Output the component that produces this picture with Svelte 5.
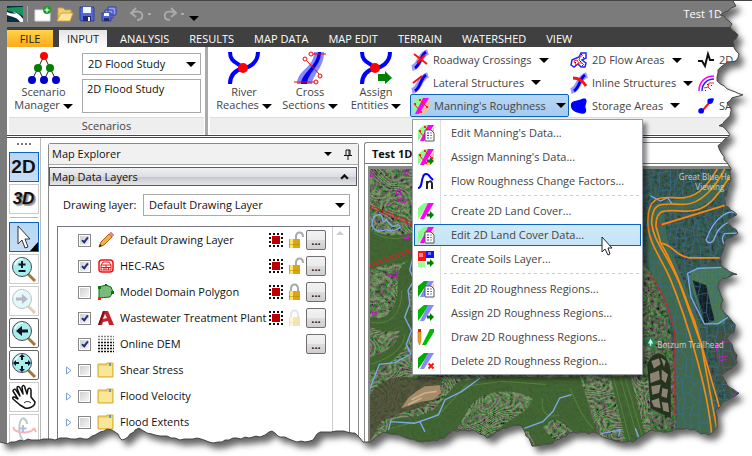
<script>
  const tabs = ['FILE', 'INPUT', 'ANALYSIS', 'RESULTS', 'MAP DATA', 'MAP EDIT', 'TERRAIN', 'WATERSHED', 'VIEW'];
  let activeTab = $state('INPUT');

  const largeButtons = [
    { icon: 'river', lines: ['River', 'Reaches'] },
    { icon: 'sections', lines: ['Cross', 'Sections'] },
    { icon: 'assign', lines: ['Assign', 'Entities'] },
  ];

  const menuGroups = [
    [
      { icon: 'manning-edit', label: "Edit Manning's Data..." },
      { icon: 'manning-assign', label: "Assign Manning's Data..." },
      { icon: 'curve', label: 'Flow Roughness Change Factors...' },
    ],
    [
      { icon: 'cover-create', label: 'Create 2D Land Cover...' },
      { icon: 'cover-edit', label: 'Edit 2D Land Cover Data...', active: true },
      { icon: 'soils', label: 'Create Soils Layer...' },
    ],
    [
      { icon: 'region-edit', label: 'Edit 2D Roughness Regions...' },
      { icon: 'region-assign', label: 'Assign 2D Roughness Regions...' },
      { icon: 'region-draw', label: 'Draw 2D Roughness Regions...' },
      { icon: 'region-delete', label: 'Delete 2D Roughness Region...' },
    ],
  ];

  let layers = $state([
    { icon: 'pencil', label: 'Default Drawing Layer', checked: true, lock: 'open', more: true },
    { icon: 'ras', label: 'HEC-RAS', checked: true, lock: 'open', more: true },
    { icon: 'polygon', label: 'Model Domain Polygon', checked: false, lock: 'closed', more: true },
    { icon: 'cad', label: 'Wastewater Treatment Plant', checked: true, lock: 'faded', more: true },
    { icon: 'dem', label: 'Online DEM', checked: true, more: true },
    { icon: 'folder', label: 'Shear Stress', checked: false, folder: true },
    { icon: 'folder', label: 'Flood Velocity', checked: false, folder: true },
    { icon: 'folder', label: 'Flood Extents', checked: false, folder: true },
  ]);

  const tools = [
    { id: '2d', label: '2D view', selected: true },
    { id: '3d', label: '3D view' },
    { id: 'pointer', label: 'Select', selected: true, first: true },
    { id: 'zoom', label: 'Zoom' },
    { id: 'next', label: 'Next view', faded: true },
    { id: 'back', label: 'Previous view', framed: true },
    { id: 'extents', label: 'Zoom extents', framed: true },
    { id: 'hand', label: 'Pan' },
    { id: 'rotate', label: 'Rotate', faded: true },
  ];

  // small repeatable generator so the mesh and the torn edge stay the same on each load
  function random(seed) {
    let s = seed;
    return () => {
      s = (s * 16807) % 2147483647;
      return s / 2147483647;
    };
  }

  function buildMesh(x0, y0, x1, y1, size) {
    const rnd = random(41);
    const rows = Math.ceil((y1 - y0) / size);
    const cols = Math.ceil((x1 - x0) / size);
    const pts = [];
    for (let r = 0; r <= rows; r++) {
      pts.push([]);
      for (let c = 0; c <= cols; c++) {
        pts[r].push([
          Math.round(x0 + (c + (rnd() - 0.5) * 0.7) * size),
          Math.round(y0 + (r + (rnd() - 0.5) * 0.7) * size),
        ]);
      }
    }
    let d = '';
    for (let r = 0; r < rows; r++) {
      for (let c = 0; c < cols; c++) {
        const p = pts[r][c];
        if ((r + c) % 2) d += `M${p}L${pts[r][c + 1]}`;
        d += `M${p}L${pts[r + 1][c]}`;
      }
    }
    return d;
  }

  function roughen(points, seed) {
    const rnd = random(seed);
    const out = [];
    for (let i = 0; i < points.length - 1; i++) {
      const [ax, ay] = points[i];
      const [bx, by] = points[i + 1];
      const n = Math.max(1, Math.round(Math.hypot(bx - ax, by - ay) / 4));
      for (let k = 0; k < n; k++) {
        const t = k / n;
        const j = k ? 2 : 0;
        out.push([
          Math.round(ax + (bx - ax) * t + (rnd() - 0.5) * j),
          Math.round(ay + (by - ay) * t + (rnd() - 0.5) * j),
        ]);
      }
    }
    out.push(points[points.length - 1]);
    return out.map((p) => p.join(' ')).join('L');
  }

  const tear = roughen([
    [733, 0], [736, 5], [731, 7], [725, 11], [720, 14], [726, 18], [732, 23], [730, 26], [735, 31], [738, 34],
    [733, 40], [734, 47], [739, 53], [736, 60], [727, 61], [718, 69], [717, 80], [727, 88], [743, 94], [732, 97],
    [727, 102], [731, 107], [730, 115], [719, 125], [725, 128], [730, 134], [718, 145], [731, 168], [731, 178],
    [727, 192], [724, 198], [725, 205], [737, 214], [726, 220], [738, 233], [727, 238], [724, 246], [720, 257],
    [723, 267], [737, 274], [722, 278], [718, 287], [723, 300], [721, 308], [735, 324], [734, 332], [727, 338],
    [737, 355], [737, 363], [722, 375], [727, 385], [739, 393], [727, 400], [715, 410], [717, 420], [717, 428],
    [708, 435], [687, 428], [667, 432], [652, 430], [633, 442], [618, 442], [605, 438], [597, 433], [573, 432],
    [553, 443], [532, 446], [525, 432], [520, 425], [503, 428], [487, 438], [473, 430], [453, 430], [437, 441],
    [417, 441], [400, 435], [383, 432], [370, 442], [363, 442], [355, 433], [340, 431], [320, 432], [313, 440],
    [297, 442], [280, 437], [272, 431], [260, 437], [237, 438], [213, 443], [197, 438], [180, 440], [167, 436],
    [147, 433], [139, 428], [128, 437], [122, 440], [115, 432], [107, 429], [95, 435], [88, 439], [67, 438],
    [40, 440], [20, 440], [7, 444], [0, 442],
  ], 7);

  const mesh = buildMesh(840, 110, 1160, 960, 24);
  const fineMesh = buildMesh(840, 110, 1160, 960, 11);
</script>

{#snippet bands(a, b, c)}
  <path d="M0 11V5L6 0H11L3 12L0 16Z" fill={a} />
  <path d="M2 16L10 0H16L6 16Z" fill={b} />
  <path d="M7 16L16 2V9L12 16Z" fill={c} />
{/snippet}

{#snippet sheet()}
  <path d="M7 5H13L16 8V16H7Z" fill="#fff" stroke="#555" />
  <path d="M9 8H11M9 10.500H11M9 13H11" stroke="#2238d8" />
  <path d="M12 8H14M12 10.500H14M12 13H14" stroke="#888" />
{/snippet}

{#snippet arrow()}
  <path d="M9 10.500H12V8L16 12L12 16V13.500H9Z" fill="#008000" />
{/snippet}

{#snippet dots()}
  <path d="M2 7L8 14M7 2L14 9" stroke="#e22" />
  <path d="M1 5h2v2H1zM6 1h2v2H6zM13 8h2v2h-2zM7 13h2v2H7z" fill="#f22" />
{/snippet}

{#snippet icon(name)}
  <svg class="icon" viewBox="0 0 16 16" aria-hidden="true">
    {#if name === 'manning'}
      {@render bands('#8f8', '#f0f', '#fb8')}{@render dots()}
    {:else if name === 'manning-edit'}
      {@render bands('#8f8', '#f0f', '#fb8')}{@render dots()}{@render sheet()}
    {:else if name === 'manning-assign'}
      {@render bands('#8f8', '#f0f', '#fb8')}{@render dots()}{@render arrow()}
    {:else if name === 'curve'}
      <path d="M0 15C4 15 3 9 5 4C6 0 10 0 12 4L15 7" fill="none" stroke="#00f" stroke-width="2" />
      <path d="M9 16V8M9 11C10 8 14 7 14 11V16" fill="none" stroke="#222" stroke-width="2" />
    {:else if name === 'cover-create'}
      {@render bands('#8f8', '#f0f', '#fff')}{@render arrow()}
    {:else if name === 'cover-edit'}
      {@render bands('#8f8', '#f0f', '#fb8')}{@render sheet()}
    {:else if name === 'soils'}
      <path d="M0 0H8V10H0Z" fill="#f11" /><path d="M8 0H16V7H8Z" fill="#11f" />
      <path d="M0 11H7V16H0Z" fill="#9f9" /><path d="M1 2H5V6H1Z" fill="#f88" /><path d="M10 1H13V4H10Z" fill="#77f" />
      {@render arrow()}
    {:else if name === 'region-edit'}
      {@render bands('#0a0', '#88f', '#fb8')}{@render sheet()}
    {:else if name === 'region-assign'}
      {@render bands('#0b0', '#88f', '#fff')}{@render arrow()}
    {:else if name === 'region-draw'}
      <path d="M4 16L12 0H16V3L8 16Z" fill="#0b0" />
      <path d="M0 3H3V12L1.500 16L0 12Z" fill="#f0a030" stroke="#a50" stroke-width=".5" /><path d="M0 0H3V3H0Z" fill="#d22" />
    {:else if name === 'region-delete'}
      {@render bands('#0a0', '#88f', '#fff')}
      <path d="M10.500 10.500L15.500 15.500M15.500 10.500L10.500 15.500" stroke="#f11" stroke-width="2" />
    {:else if name === 'roadway' || name === 'lateral' || name === 'inline'}
      <path d="M0 16C9 14 6 3 16 0" fill="none" stroke="#99f" stroke-width="6" />
      <path d="M3 16C9 12 8 4 14 0" fill="none" stroke="#00e" stroke-width="3" />
      {#if name === 'roadway'}
        <path d="M2 2L15 12M13 3L5 11" stroke="#f11" stroke-width="2" />
      {:else if name === 'lateral'}
        <path d="M1 8L10 1" stroke="#f11" stroke-width="2" />
      {:else}
        <path d="M2 3C8 3 12 6 15 11" fill="none" stroke="#f11" stroke-width="3" />
      {/if}
    {:else if name === 'flow'}
      <path d="M1 8L8 5L10 1L15 1L15 6L11 8L15 11L14 15L10 15L7 12L3 15L0 13Z" fill="#fff" stroke="#22f" stroke-width="1.500" />
      <path d="M3 9L6 8L8 11L5 13ZM9 5L12 3M9 5L8 8L11 11L13 13M8 11L11 11" fill="none" stroke="#f22" />
      <path d="M4 10h1v1H4zM10 2h1v1h-1zM12 5h1v1h-1zM9 9h1v1H9zM11 13h1v1h-1z" fill="#222" />
    {:else if name === 'storage'}
      <path d="M15 1C17 5 13 7 15 11C16 15 13 17 8 15C2 14-1 10 0 6C1 3 4 3 8 2C11 1 13 0 15 1Z" fill="#00f" />
    {:else if name === 'pulse'}
      <path d="M0 9H4L7 14L10 2L12 8H16" fill="none" stroke="#111" stroke-width="2" />
    {:else if name === 'boundary'}
      <path d="M1 16C1 7 7 1 16 1" fill="none" stroke="#f0f" stroke-width="1.500" />
      <path d="M4 16C4 9 9 4 16 4" fill="none" stroke="#22f" stroke-width="1.500" />
      <path d="M6 13L10 12L11 8L16 8M10 12L13 15" fill="none" stroke="#f22" />
      <path d="M9 9h1v1H9zM13 10h1v1h-1zM7 15h1v1H7z" fill="#222" />
    {:else if name === 'connection'}
      <path d="M5 12L11 5" stroke="#f11" stroke-width="2" />
      <path d="M10 1C12 0 16 0 16 1C15 3 15 6 12 6C9 6 9 3 10 1Z" fill="#00f" />
      <path d="M1 11C3 9 6 10 6 13C6 16 3 16 1 15C0 14 0 12 1 11Z" fill="#00f" />
    {:else if name === 'pencil'}
      <path d="M1 15L3 10L11 2L14 5L6 13Z" fill="#f6b040" stroke="#a5621c" />
      <path d="M11 2L13 0L16 3L14 5Z" fill="#e88" stroke="#a66" stroke-width=".5" />
      <path d="M1 15L2 12L4 14Z" fill="#222" />
    {:else if name === 'ras'}
      <rect x="1" y="2" width="14" height="12" rx="3" fill="#fff" stroke="#e11" stroke-width="1.500" />
      <path d="M3 12V7H13V12ZM3 7L5 4H11L13 7M6 12V9M8 12V7M10.500 12V9M3 9.500H13" fill="none" stroke="#e11" />
    {:else if name === 'polygon'}
      <path d="M1 3L8 1L13 3L15 8L12 13L1 14Z" fill="#7db87d" stroke="#087808" />
      <path d="M0 2h3v3H0zM7 0h2v2H7zM13 7h3v3h-3z" fill="#087808" /><path d="M0 13h3v3H0z" fill="#f22" />
    {:else if name === 'cad'}
      <path d="M5 1H10L16 15H11L10 11L5 12L4 15H0ZM7 4L5 9L9 8Z" fill="#c82027" />
      <path d="M5 1H7L2 15H0Z" fill="#7c1015" />
    {:else if name === 'dem'}
      {#each [0, 3, 6, 9, 12, 15] as y}
        <path d="M0 {y + 0.5}H16" stroke={y < 6 ? '#888' : '#111'} stroke-width="1.500" stroke-dasharray="2 1" />
      {/each}
    {:else if name === 'folder'}
      <path d="M0 2H9V1H15V15H0Z" fill="#f3d56a" stroke="#d5aa35" />
      <path d="M1 4H14V14H1Z" fill="#fae698" /><path d="M11 1h2v3h-2z" fill="#4ba0e0" />
    {:else if name === 'new'}
      <path d="M0 4H15V15H0Z" fill="#fff" stroke="#ddd" /><circle cx="12" cy="4" r="4" fill="#1b9c2c" /><path d="M12 1.500V6.500M9.500 4H14.500" stroke="#fff" />
    {:else if name === 'open'}
      <path d="M1 14V2H6L8 4H14V7" fill="#f3d078" stroke="#d5a23d" /><path d="M0 15L4 7H16L13 15Z" fill="#ffe69a" stroke="#d5a23d" />
    {:else if name === 'save'}
      <path d="M1 1H15V15H2L1 14Z" fill="#5068d8" stroke="#3040a0" /><path d="M4 1H12V7H4Z" fill="#f4f6ff" /><path d="M4 10H12V15H4Z" fill="#222a70" /><path d="M9 11h2v4H9z" fill="#fff" />
    {:else if name === 'save-all'}
      <path d="M7 1H15V9H7ZM4 4H12V12H4Z" fill="#8c9cf0" stroke="#3040a0" /><path d="M1 7H10V15H1Z" fill="#5068d8" stroke="#3040a0" /><path d="M3 7H8V10H3Z" fill="#fff" /><path d="M3 12h5v3H3z" fill="#222a70" />
    {:else if name === 'undo' || name === 'redo'}
      <g transform={name === 'redo' ? 'translate(16 0) scale(-1 1)' : undefined}>
        <path d="M8 14C13 14 14 11 13 8C12 5 7 5 3 7M7 2L2 7L7 11" fill="none" stroke="#aaa" stroke-width="2" />
      </g>
    {/if}
  </svg>
{/snippet}

{#snippet largeIcon(name)}
  <svg class="large-icon" viewBox="0 0 32 32" aria-hidden="true">
    {#if name === 'scenario'}
      <path d="M16 4L4 28M10 16L16 28M16 4L28 28M22 16L16 28" stroke="#222" fill="none" />
      <circle cx="16" cy="4" r="4" fill="#f00" />
      <circle cx="10" cy="16" r="4" fill="#008000" /><circle cx="22" cy="16" r="4" fill="#008000" />
      <circle cx="4" cy="28" r="4" fill="#00c" /><circle cx="16" cy="28" r="4" fill="#00c" /><circle cx="28" cy="28" r="4" fill="#00c" />
    {:else if name === 'sections'}
      <path d="M3 32C3 18 20 16 20 0H30C30 16 20 20 18 32Z" fill="#88f" />
      <path d="M7 32C8 20 22 16 24 0H27C27 14 14 20 13 32Z" fill="#00e" />
      <path d="M17 2H32M13 9L25 22M0 30H21" stroke="#f00" fill="none" />
      <g fill="#fff" stroke="#f00"><circle cx="17" cy="2" r="2" /><circle cx="11" cy="7" r="2" /><circle cx="26" cy="24" r="2" /><circle cx="22" cy="30" r="2" /></g>
    {:else}
      <path d="M2 0C2 10 9 10 15 16C22 16 30 10 30 0M15 16C8 18 2 22 2 32" fill="none" stroke="#00f" stroke-width="4" />
      <circle cx="15" cy="16" r="5" fill="#f00" />
      {#if name === 'assign'}<path d="M18 22H25V19L32 26L25 32V29H18Z" fill="#008000" />{/if}
    {/if}
  </svg>
{/snippet}

{#snippet lens()}
  <path d="M17 18L25 26" stroke="#a8743c" stroke-width="3" />
  <circle cx="12" cy="12" r="9.500" fill="#a8efe6" stroke="#446" />
  <path d="M5 10A8 8 0 0 1 13 4" stroke="#e8fffc" stroke-width="2" fill="none" />
{/snippet}

{#snippet toolIcon(id)}
  {#if id === '2d'}
    <span class="view-label">2D</span>
  {:else if id === '3d'}
    <span class="view-label slanted">3D</span>
  {:else}
    <svg viewBox="0 0 28 28" aria-hidden="true">
      {#if id === 'pointer'}
        <path d="M8 3V21L12 17L15 25L18 24L15 16H20Z" fill="#fff" stroke="#333" /><path d="M28 19V28H20Z" />
      {:else if id === 'zoom'}
        {@render lens()}<path d="M12 6V13M8.500 9.500H15.500M8.500 16H15.500" stroke="#113" stroke-width="2" />
      {:else if id === 'next'}
        {@render lens()}<path d="M6 10.500H12V7L18 12L12 17V13.500H6Z" fill="#336" />
      {:else if id === 'back'}
        {@render lens()}<path d="M18 10.500H12V7L6 12L12 17V13.500H18Z" fill="#113" />
      {:else if id === 'extents'}
        {@render lens()}<path d="M12 3L15 6H13V9H11V6H9ZM12 21L9 18H11V15H13V18H15ZM3 12L6 9V11H9V13H6V15ZM21 12L18 15V13H15V11H18V9Z" fill="#113" />
      {:else if id === 'hand'}
        <path d="M10 22L3 16C2 14 4 13 6 15L8 16L3 8C3 6 5 6 6 7L10 13L7 5C7 3 9 3 10 5L13 11L12 4C13 2 15 2 15 5L17 11L18 6C19 5 21 5 21 7L21 14L25 19C25 24 18 26 15 25Z" fill="#fff" stroke="#111" stroke-width="1.500" stroke-linejoin="round" />
        <path d="M14 20C16 18 19 18 21 20" fill="none" stroke="#111" />
      {:else}
        <path d="M13 3C8 6 8 20 13 25M13 3C17 5 17 9 17 9" fill="none" stroke="#375" stroke-width="2" />
        <path d="M4 12C1 18 22 20 24 13M24 13L26 17" fill="none" stroke="#d33" stroke-width="2" />
        <path d="M13 10V17M9.500 13.500H16.500" stroke="#33c" stroke-width="2" />
      {/if}
    </svg>
  {/if}
{/snippet}

{#snippet splitButton(name, label)}
  <button class="small-button" aria-label={label || name}>{@render icon(name)}<span>{label}</span><i class="caret"></i></button>
{/snippet}

<div class="app">
  <header class="titlebar">
    <svg class="logo" viewBox="0 0 16 16" aria-hidden="true">
      <path d="M0 0H16V16H0Z" fill="#0a2c40" /><path d="M0 2C4 1 10 1 16 1V10C11 6 5 6 0 4Z" fill="#14965a" />
      <path d="M0 4C5 7 10 4 16 13V16H13C10 11 5 11 0 9V6C3 8 7 7 9 8C6 5 3 6 0 4Z" fill="#fff" />
    </svg>
    <span class="title-rule"></span>
    {#each ['new', 'open', 'save', 'save-all'] as name}
      <button class="quick" aria-label={name}>{@render icon(name)}</button>
    {/each}
    <button class="quick history" aria-label="Undo">{@render icon('undo')}<i></i></button>
    <button class="quick history" aria-label="Redo">{@render icon('redo')}<i></i></button>
    <button class="quick more" aria-label="Customize toolbar"><i class="caret"></i></button>
    <span class="window-title">Test 1D</span>
  </header>

  <nav class="tabs">
    {#each tabs as tab}
      <button class:file={tab === 'FILE'} class:active={tab === activeTab} onclick={() => (activeTab = tab)}>{tab}</button>
    {/each}
  </nav>

  <section class="ribbon">
    <div class="group scenarios">
      <div class="group-body">
        <button class="large-button">
          {@render largeIcon('scenario')}
          <span>Scenario</span>
          <span>Manager <i class="caret"></i></span>
        </button>
        <div class="fields">
          <div class="select-wrap">
            <select aria-label="Scenario"><option>2D Flood Study</option></select>
            <i class="caret"></i>
          </div>
          <textarea aria-label="Scenario description">2D Flood Study</textarea>
        </div>
      </div>
      <footer>Scenarios</footer>
    </div>
    <div class="group inputs">
      <div class="group-body">
        {#each largeButtons as button}
          <button class="large-button">
            {@render largeIcon(button.icon)}
            <span>{button.lines[0]}</span>
            <span>{button.lines[1]} <i class="caret"></i></span>
          </button>
        {/each}
        <div class="stack first">
          {@render splitButton('roadway', 'Roadway Crossings')}
          {@render splitButton('lateral', 'Lateral Structures')}
          <div class="menu-anchor">
            <button class="small-button open" aria-haspopup="menu" aria-expanded="true">
              {@render icon('manning')}<span>Manning's Roughness</span><i class="caret"></i>
            </button>
            <div class="menu" role="menu">
              {#each menuGroups as group}
                <div class="menu-group">
                  {#each group as item}
                    <button role="menuitem" class:active={item.active}>{@render icon(item.icon)}<span>{item.label}</span></button>
                  {/each}
                </div>
              {/each}
              <svg class="cursor" viewBox="0 0 12 20" aria-hidden="true">
                <path d="M1 1V16L4 13L7 19L9 18L7 12H11Z" fill="#fff" stroke="#223" />
              </svg>
            </div>
          </div>
        </div>
        <div class="stack second">
          {@render splitButton('flow', '2D Flow Areas')}
          {@render splitButton('inline', 'Inline Structures')}
          {@render splitButton('storage', 'Storage Areas')}
        </div>
        <div class="stack">
          {@render splitButton('pulse', '2D')}
          {@render splitButton('boundary', '')}
          {@render splitButton('connection', 'SA')}
        </div>
      </div>
      <footer></footer>
    </div>
  </section>

  <main>
    <aside class="toolbar">
      <span class="grip"></span>
      {#each tools as tool}
        <button class:selected={tool.selected} class:faded={tool.faded} class:framed={tool.framed} class:first={tool.first} aria-label={tool.label}>
          {@render toolIcon(tool.id)}
        </button>
      {/each}
    </aside>

    <section class="explorer">
      <header class="panel-title">
        <span>Map Explorer</span>
        <i class="caret"></i>
        <svg class="pin" viewBox="0 0 8 11" aria-hidden="true"><path d="M2 6V1H6V6M5 1V6M0 6.500H8M4 7V11" fill="none" stroke="#111" /></svg>
      </header>
      <button class="section-title">
        <span>Map Data Layers</span>
        <svg viewBox="0 0 8 6" aria-hidden="true"><path d="M1 5L4 2L7 5" fill="none" stroke="#111" stroke-width="2" /></svg>
      </button>
      <div class="drawing-layer">
        <label for="drawing-layer">Drawing layer:</label>
        <div class="select-wrap">
          <select id="drawing-layer"><option>Default Drawing Layer</option></select>
          <i class="caret"></i>
        </div>
      </div>
      <div class="tree">
        <ul>
          {#each layers as layer, i}
            <li>
              <span class="expander">
                {#if layer.folder}
                  <svg viewBox="0 0 6 9" aria-hidden="true"><path d="M.5 1V8L5 4.500Z" fill="#fff" stroke="#7da0cf" /></svg>
                {/if}
              </span>
              <input type="checkbox" id="layer-{i}" bind:checked={layer.checked} />
              {@render icon(layer.icon)}
              <label for="layer-{i}">{layer.label}</label>
              {#if layer.lock}
                <span class="extent"></span>
                <svg class="lock" class:pale={layer.lock === 'faded'} viewBox="0 0 18 18" aria-hidden="true">
                  <path d={layer.lock === 'open' ? 'M10 9V6C10 0 17 0 17 6' : 'M5 9V6C5 0 12 0 12 6V9'} fill="none" stroke="#aaa" stroke-width="2" />
                  <path d="M3 8H14V17H3Z" fill="#dba514" /><path d="M4 8H7V17H4Z" fill="#ffe36a" /><path d="M3 13.500H14" stroke="#b88200" stroke-opacity=".5" />
                </svg>
              {/if}
              {#if layer.more}<button class="dots">...</button>{/if}
            </li>
          {/each}
        </ul>
        <div class="scroll"><i></i></div>
      </div>
    </section>

    <section class="map-window">
      <header>Test 1D</header>
      <svg class="map" viewBox="27 120 1149 858" preserveAspectRatio="xMinYMin slice" aria-label="Aerial map">
        <defs>
          <filter id="trees" x="0" y="0" width="100%" height="100%">
            <feTurbulence type="fractalNoise" baseFrequency=".1" numOctaves="3" seed="4" />
            <feColorMatrix values=".6 0 0 0 -.17  0 .65 0 0 -.13  .4 0 0 0 -.1  0 0 0 0 1" />
          </filter>
          <filter id="contours" x="0" y="0" width="100%" height="100%">
            <feTurbulence type="fractalNoise" baseFrequency=".005 .007" numOctaves="3" seed="12" />
            <feColorMatrix values="0 0 0 0 .3  0 0 0 0 .46  0 0 0 0 .18  1.3 0 0 0 -.15" />
            <feComponentTransfer>
              <feFuncA type="table" tableValues="0 0 0 0 .8 0 0 .8 0 0 .8 0 0 .8 0 0 .8 0 0 .8 0 0 .8 0 0 .8 0 0 .8 0 0 .8 0 0 .8 0 0 .8 0 0 .8 0 0 .8 0 0 .8 0 0 0" />
            </feComponentTransfer>
          </filter>
          <clipPath id="mesh-area">
            <path d="M830 110H1176V960H935C935 780 935 560 880 460L840 400Z" />
          </clipPath>
        </defs>
        <rect x="27" y="120" width="1149" height="858" fill="#1b2a1d" />
        <rect x="27" y="120" width="1149" height="858" filter="url(#trees)" opacity=".8" />
        <rect x="27" y="120" width="830" height="858" filter="url(#contours)" opacity=".8" />

        <g class="meadow">
          <path d="M27 300C60 320 100 320 156 310V420L150 470C130 500 160 550 150 600C150 640 100 700 27 720V680C70 660 110 650 115 600C60 610 40 590 27 590V560C70 570 100 550 110 480C110 430 110 410 140 395C80 400 50 410 27 420Z" />
          <path d="M60 940L85 870C130 850 190 860 220 830L290 750L420 735L560 740L650 735L700 900L640 910C590 860 570 850 540 890L580 930L520 950L500 900L430 890L380 920C440 850 500 850 510 800C450 770 360 770 320 830L270 920L200 950Z" />
          <path d="M740 735H800L850 930L790 940Z" />
        </g>
        <g class="ridges">
          <path d="M30 575C80 585 120 560 122 480M30 700C90 680 130 650 130 610M40 310C80 335 120 325 150 320M90 890C150 870 200 870 240 840L310 765L420 750L550 760M300 900L340 830C380 785 460 790 500 810M540 800C530 850 560 860 590 850M620 770C640 810 650 850 690 890M750 740L800 930M770 740L825 930M785 740L840 930" />
        </g>
        <path d="M27 790C60 740 110 730 157 740H240C250 790 200 830 130 840L60 870L27 930Z" fill="#4a4731" opacity=".75" />
        <path d="M120 830L140 800L165 780L190 765L235 762L238 785L215 805L175 812Z" fill="#a68b69" />
        <path d="M150 805L190 785L225 780M140 820L180 800" fill="none" stroke="#c9b290" stroke-width="5" />
        <path d="M850 700C870 650 910 660 920 720V860L860 830Z" fill="#24331f" />
        <path d="M862 690L885 682L890 700L870 712ZM890 680L905 690L900 708ZM858 728L885 718L888 745L860 755ZM893 715L912 730L905 755L893 745ZM862 765L890 760L885 785L865 790ZM895 770L912 775L908 800L892 795ZM862 808L885 800L890 830L870 826ZM893 812L912 815L915 842L898 838Z" fill="#8b8272" />

        <g clip-path="url(#mesh-area)">
          <path d="M830 110H1176V960H830Z" fill="#24474a" opacity=".6" />
          <path d="M850 240C880 200 1000 240 1070 120L1110 130C1060 240 980 240 900 250L910 330L1000 560L1070 900L1040 940H940L930 600L850 400Z" fill="#41694a" />
          <path d="M970 440L1000 410L1120 410L1080 450L1090 530L1080 580L1020 582Z" fill="#4c7a52" />
          <path d="M985 450L1025 465L1050 570L1020 580Z" fill="#151f22" />
          <path d="M1050 610L1120 590L1150 690L1100 800L1060 740Z" fill="#46503d" />
          <path class="cells" d={mesh} />
          <path class="cells fine" d={fineMesh} />
        </g>

        <g class="water">
          <path d="M40 260C20 300 50 310 75 300C100 310 130 290 110 285C90 300 85 280 75 270C60 290 70 260 55 255Z" />
          <path d="M155 380L145 420L158 450L140 480L145 520L130 560L150 600L135 640L148 670L100 695L55 700L35 750L27 775" />
          <path d="M82 895L88 870L160 875L230 850L250 805L300 780L355 740M190 900L175 870M485 890L540 870L570 840L590 800L625 790" />
          <path d="M725 930L715 905L770 895L765 915M815 890L828 925" />
          <path d="M860 200L890 215L910 205L925 225" />
          <path d="M1125 260C1100 230 1050 260 1025 330C1030 345 1045 340 1050 325C1060 295 1080 280 1105 275M1125 310L1080 312C1065 330 1080 350 1090 345" />
          <path d="M1070 412L1000 415L970 430L980 500L1020 580L1060 580L1090 560" />
        </g>
        <g class="road">
          <path d="M27 235L160 290M27 228L160 282M27 410L160 362M27 402L160 354M850 425C890 470 920 540 932 610V850M850 295L1090 225" />
        </g>
        <g class="levee">
          <path d="M1058 120C1040 150 1010 200 960 205C910 210 850 180 852 280C853 340 890 380 920 450C960 550 1030 760 1042 915" />
          <path d="M1080 120C1055 170 1010 225 960 225C900 225 865 210 863 280C870 340 910 370 950 470L1010 640L1058 898" />
          <path d="M1110 120C1065 185 1040 245 970 245C910 245 875 230 876 290L890 340C940 420 960 500 990 570L1068 840" />
          <path d="M893 285L1090 225M890 340C930 345 925 375 975 384H1077" />
        </g>
        <g class="buildings">
          <path d="M27 132L37 132L35 142H27ZM130 125L142 128L138 137L128 133ZM105 185L118 182V195H106ZM110 205L135 212L132 220L108 213ZM125 317H142V326H127ZM84 432L107 428V437L84 440ZM34 545H45V556H36ZM628 902L636 900V908ZM1100 630L1055 640L1060 680L1090 675M1065 690L1085 685M1140 785L1110 790L1097 808" />
        </g>
        <circle cx="860" cy="634" r="15" fill="#238b58" /><path d="M860 624L868 638H852ZM858 638h4v7h-4z" fill="#dfe" />
        <g class="places">
          <text x="944" y="153">Great Blue He</text>
          <text x="993" y="181">Viewing A</text>
          <text x="880" y="650">Botzum Trailhead</text>
        </g>
      </svg>
    </section>
  </main>

  <!-- ragged sheet edge with its shadow -->
  <svg class="tear" viewBox="0 0 752 456" preserveAspectRatio="none" aria-hidden="true">
    <defs>
      <clipPath id="outside"><path d="M{tear}V456H752V0Z" /></clipPath>
      <filter id="soft"><feGaussianBlur stdDeviation="3" /></filter>
    </defs>
    <g clip-path="url(#outside)">
      <path d="M0 0H752V456H0Z" fill="#fff" />
      <path d="M{tear}V0Z" transform="translate(5 6)" fill="#666" filter="url(#soft)" />
    </g>
    <path d="M{tear}" fill="none" stroke="#444" />
  </svg>
</div>

<style>
  :global(body) {
    margin: 0;
    background: #fff;
  }

  .app {
    position: relative;
    display: flex;
    flex-direction: column;
    height: 100vh;
    padding-left: 7px;
    box-sizing: border-box;
    overflow: hidden;
    background: #7b7b7b;
    border-top: 1px solid #444;
    font-family: 'Open Sans', 'Noto Sans', sans-serif;
    font-size: 11px;
    line-height: 14px;
    color: #111;
  }

  button, select, textarea, input {
    margin: 0;
    padding: 0;
    font: inherit;
    color: inherit;
    border: 0;
    border-radius: 0;
    background: none;
    box-sizing: border-box;
  }

  svg {
    display: block;
    flex: none;
  }

  .icon {
    width: 16px;
    height: 16px;
    overflow: visible;
  }

  .caret {
    flex: none;
    display: inline-block;
    border: 5px solid transparent;
    border-top: 5px solid #000;
    border-bottom: 0;
  }

  /* title bar */
  .titlebar {
    flex: none;
    display: flex;
    align-items: center;
    height: 26px;
  }
  .logo {
    width: 16px;
    height: 16px;
  }
  .title-rule {
    width: 1px;
    height: 16px;
    margin: 0 7px 0 4px;
    background: #aaa;
  }
  .quick {
    display: flex;
    align-items: center;
    margin-right: 6px;
  }
  .history {
    margin: 0 5px 0 6px;
    gap: 3px;
  }
  .history i {
    width: 3px;
    height: 2px;
    background: #aaa;
  }
  .more {
    padding-top: 8px;
  }
  .window-title {
    margin: 0 30px 0 auto;
    color: #fff;
  }

  /* ribbon tabs */
  .tabs {
    flex: none;
    display: flex;
    align-items: flex-end;
    height: 20px;
    background: #404040;
  }
  .tabs button {
    height: 17px;
    padding: 0 10px;
    color: #fff;
    line-height: 16px;
    white-space: nowrap;
  }
  .tabs .file {
    width: 46px;
    margin-right: 6px;
    color: #222;
    background: linear-gradient(#ffd34a, #fba919);
  }
  .tabs .active {
    padding: 0 8px;
    margin-right: 3px;
    color: #222;
    background: linear-gradient(#e4e4e4, #fff);
  }

  /* ribbon */
  .ribbon {
    flex: none;
    position: relative;
    z-index: 2;
    display: flex;
    height: 88px;
    background: #fff;
    border-bottom: 3px double #444;
  }
  .group {
    display: flex;
    flex-direction: column;
  }
  .scenarios {
    flex: none;
    width: 198px;
    border-right: 3px solid #aaa;
  }
  .inputs {
    flex: 1;
    min-width: 0;
  }
  .group-body {
    flex: 1;
    display: flex;
    min-height: 0;
  }
  .inputs .group-body {
    padding-left: 3px;
  }
  .group footer {
    flex: none;
    height: 16px;
    margin: 0 1px 1px 2px;
    text-align: center;
    line-height: 16px;
    color: #444;
    background: #eee;
    border-top: 1px solid #ddd;
  }
  .large-button {
    flex: none;
    display: flex;
    flex-direction: column;
    align-items: center;
    width: 66px;
    padding-top: 5px;
    line-height: 13px;
    color: #444;
    white-space: nowrap;
  }
  .scenarios .large-button {
    width: 73px;
  }
  .large-icon {
    width: 32px;
    height: 32px;
    overflow: visible;
    margin-bottom: 1px;
  }
  .fields {
    flex: 1;
    display: flex;
    flex-direction: column;
    gap: 4px;
    min-width: 0;
    padding: 6px 4px 4px 2px;
  }
  .select-wrap {
    position: relative;
    display: flex;
    align-items: center;
    border: 1px solid #aaa;
    background: #fff;
  }
  .select-wrap select {
    appearance: none;
    width: 100%;
    height: 20px;
    padding: 0 20px 0 5px;
  }
  .select-wrap .caret {
    position: absolute;
    right: 4px;
    pointer-events: none;
  }
  textarea {
    width: 100%;
    height: 35px;
    padding: 2px 4px;
    resize: none;
    border: 1px solid #aaa;
  }
  .stack {
    flex: none;
    display: flex;
    flex-direction: column;
    align-items: flex-start;
    padding-top: 2px;
  }
  .stack.first {
    width: 159px;
    margin-left: 1px;
  }
  .stack.second {
    width: 127px;
  }
  .small-button {
    display: flex;
    align-items: center;
    gap: 5px;
    height: 23px;
    padding: 0 2px;
    color: #444;
    white-space: nowrap;
  }
  .small-button .caret {
    margin-left: 2px;
  }
  .small-button.open {
    width: 100%;
    border: 1px solid #0a64ba;
    border-radius: 2px;
    background: linear-gradient(#b8d6f3, #a5cbf0);
  }
  .small-button.open .caret {
    margin-left: auto;
  }
  .menu-anchor {
    position: relative;
    width: 100%;
  }

  /* drop-down menu */
  .menu {
    position: absolute;
    top: 25px;
    left: 2px;
    z-index: 5;
    width: 231px;
    padding: 1px;
    box-sizing: border-box;
    border: 1px solid #999ca2;
    background: linear-gradient(90deg, #fff 27px, #ddd 27px, #ddd 28px, #fff 28px);
    box-shadow: 4px 4px 4px rgba(0, 0, 0, 0.45);
  }
  .menu-group {
    display: flex;
    flex-direction: column;
  }
  .menu-group + .menu-group {
    padding-top: 6px;
    background: repeating-linear-gradient(90deg, #ccc 0 3px, transparent 3px 6px) 30px 2px / 100% 1px no-repeat;
  }
  .menu button {
    display: flex;
    align-items: center;
    gap: 17px;
    height: 22px;
    margin: 1px 0;
    padding: 0 3px;
    border: 1px solid transparent;
    color: #444;
    white-space: nowrap;
  }
  .menu button.active {
    border-color: #0a64ba;
    background: linear-gradient(#cfe9f6, #c4e5f6);
  }
  .cursor {
    position: absolute;
    left: 188px;
    top: 116px;
    width: 12px;
    height: 20px;
  }

  /* left toolbar */
  main {
    flex: 1;
    display: flex;
    min-height: 0;
    background: #fff;
  }
  .toolbar {
    flex: none;
    display: flex;
    flex-direction: column;
    align-items: center;
    gap: 2px;
    width: 34px;
    box-sizing: border-box;
    border-right: 1px solid #bbb;
  }
  .grip {
    width: 14px;
    height: 2px;
    margin: 5px 0 5px;
    background: repeating-linear-gradient(90deg, #777 0 2px, transparent 2px 4px);
  }
  .toolbar button {
    position: relative;
    flex: none;
    width: 30px;
    height: 30px;
    border: 1px solid #ccc;
  }
  .toolbar .first {
    margin-top: 6px;
  }
  .toolbar .first::before {
    content: '';
    position: absolute;
    left: 0;
    right: 0;
    top: -6px;
    border-top: 1px solid #bbb;
  }
  .toolbar .selected {
    border-color: #0a64ba;
    background: linear-gradient(#b8d6f3, #c6def6);
  }
  .toolbar .framed {
    border-color: #666;
    border-radius: 2px;
  }
  .toolbar .faded svg {
    opacity: 0.35;
  }
  .view-label {
    font: bold 19px/28px 'Liberation Sans', sans-serif;
  }
  .slanted {
    font-size: 17px;
    font-style: italic;
    text-shadow: 1px 1px #888, 2px 2px #aaa;
  }

  /* map explorer */
  .explorer {
    flex: none;
    display: flex;
    flex-direction: column;
    width: 311px;
    margin: 5px 0 0 7px;
    box-sizing: border-box;
    border: 1px solid #888;
    border-bottom: 0;
    border-radius: 3px 3px 0 0;
  }
  .panel-title {
    display: flex;
    align-items: center;
    height: 20px;
    padding: 0 6px 0 3px;
    border-bottom: 1px solid #aaa;
    background: #f1f1f1;
  }
  .panel-title .caret {
    margin: 0 12px 0 auto;
    border-width: 4px 4px 0;
  }
  .pin {
    width: 8px;
    height: 11px;
  }
  .section-title {
    display: flex;
    align-items: center;
    justify-content: space-between;
    height: 19px;
    margin: 2px 1px 0 0;
    padding: 0 7px 0 2px;
    border: 1px solid #555a66;
    background: linear-gradient(#f0f1f3, #dcdee2 50%, #c3c6cc 51%, #e4e5e8);
  }
  .section-title svg {
    width: 9px;
    height: 7px;
  }
  .drawing-layer {
    display: flex;
    align-items: center;
    gap: 7px;
    margin: 8px 8px 10px 14px;
  }
  .drawing-layer label {
    width: 73px;
    white-space: nowrap;
  }
  .drawing-layer .select-wrap {
    flex: 1;
  }
  .tree {
    flex: 1;
    display: flex;
    min-height: 0;
    margin: 0 8px;
    border: 1px solid #778;
    border-bottom: 0;
  }
  ul {
    flex: 1;
    margin: 0;
    padding: 0;
    list-style: none;
  }
  li {
    display: flex;
    align-items: center;
    height: 26px;
    padding-right: 6px;
  }
  .expander {
    width: 12px;
    padding-left: 8px;
  }
  .expander svg {
    width: 6px;
    height: 9px;
  }
  input[type='checkbox'] {
    appearance: none;
    position: relative;
    flex: none;
    width: 13px;
    height: 13px;
    margin-right: 7px;
    border: 1px solid #888;
    background: linear-gradient(135deg, #ccc, #fafafa);
    box-shadow: inset 0 0 0 1px #fff;
  }
  input[type='checkbox']:checked::before {
    content: '';
    position: absolute;
    left: 4px;
    top: 1px;
    width: 2px;
    height: 5px;
    border: solid #22307c;
    border-width: 0 2px 2px 0;
    transform: rotate(38deg);
  }
  li label {
    flex: 1;
    margin-left: 6px;
    white-space: nowrap;
  }
  /* dashed black frame, white gap, red square */
  .extent {
    width: 8px;
    height: 8px;
    margin-right: 3px;
    padding: 1px;
    border: 2px dotted #111;
    background: #c00000 content-box;
  }
  .lock {
    width: 18px;
    height: 18px;
    margin-right: 2px;
  }
  .pale {
    opacity: 0.3;
  }
  .dots {
    width: 20px;
    height: 20px;
    padding-top: 2px;
    border: 1px solid #707070;
    border-radius: 2px;
    font-weight: bold;
    background: linear-gradient(#f2f2f2, #ebebeb 50%, #ddd 51%, #cfcfcf);
  }
  .scroll {
    width: 16px;
    border-left: 1px solid #ccc;
  }
  .scroll i {
    display: block;
    width: 0;
    margin: 4px 0 0 3px;
    border: 4px solid transparent;
    border-top: 0;
    border-bottom: 4px solid #ccc;
  }

  /* map window */
  .map-window {
    flex: 1;
    display: flex;
    flex-direction: column;
    min-width: 0;
    margin: 4px 0 0 5px;
    border: 1px solid #888;
    border-right: 0;
    border-radius: 3px 0 0 0;
  }
  .map-window header {
    flex: none;
    height: 20px;
    padding-left: 7px;
    font-weight: bold;
    line-height: 22px;
    border-bottom: 1px solid #777;
  }
  .map {
    flex: 1;
    min-height: 0;
    width: 100%;
    margin: 2px 0 0 3px;
    border: solid #888;
    border-width: 3px 0 0 2px;
  }
  .meadow {
    fill: #3e622f;
    opacity: 0.9;
  }
  .ridges {
    fill: none;
    stroke: #56803f;
    stroke-width: 3px;
  }
  .cells {
    fill: none;
    stroke: #3c70a0;
    stroke-width: 2px;
  }
  .fine {
    stroke: #346a78;
    opacity: 0.4;
  }
  .water {
    fill: none;
    stroke: #7fa9ee;
    stroke-width: 4px;
  }
  .road {
    fill: none;
    stroke: #c32a2a;
    stroke-width: 3px;
  }
  .levee {
    fill: none;
    stroke: #f58a12;
    stroke-width: 5px;
  }
  .buildings {
    fill: none;
    stroke: #c416c4;
    stroke-width: 3px;
  }
  .places {
    fill: #c6d0cf;
    font-size: 24px;
  }

  .tear {
    position: absolute;
    inset: 0;
    z-index: 10;
    width: 100%;
    height: 100%;
    pointer-events: none;
  }
</style>
